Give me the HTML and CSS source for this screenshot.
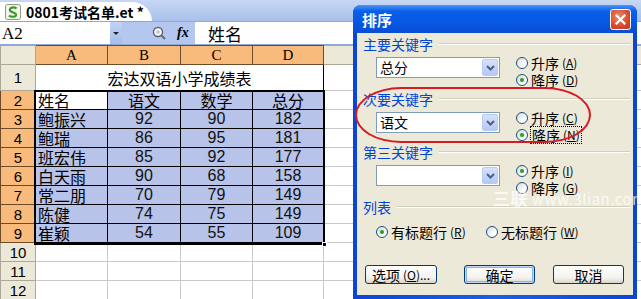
FILE: index.html
```html
<!DOCTYPE html>
<html lang="zh-CN">
<head>
    <meta charset="UTF-8">
    <title>0801考试名单.et - 排序</title>
    <link rel="stylesheet" href="styles.css">
</head>
<body>
<div class="app">
    <!-- pestaña del libro -->
    <div class="tabbar">
        <div class="tab">
            <svg class="tab-icon" width="16" height="16" viewBox="0 0 16 16">
                <rect x="0.5" y="0.5" width="15" height="15" rx="2" fill="#f4f4ee" stroke="#8a9a7a"/>
                <path d="M11.5 4.5 C 9 2.5, 4 3.5, 5 6.5 C 6 9, 11.5 8, 11 11 C 10.5 13.5, 5.5 13, 4 11.5" fill="none" stroke="#3a9a2a" stroke-width="2.2"/>
            </svg>
            <span class="tab-title">0801考试名单.et *</span>
        </div>
    </div>

    <!-- barra de fórmulas -->
    <div class="formula">
        <div class="namebox">A2</div>
        <div class="nb-drop"><span></span></div>
        <div class="fx-tools">
            <svg width="14" height="14" viewBox="0 0 14 14">
                <circle cx="6" cy="6" r="4.5" fill="#fff" stroke="#5a6070" stroke-width="1.4"/>
                <circle cx="6" cy="6" r="2" fill="#c8ccd8"/>
                <line x1="9.3" y1="9.3" x2="13" y2="13" stroke="#6a6a6a" stroke-width="2"/>
            </svg>
            <span class="fx">fx</span>
        </div>
        <div class="fx-input">姓名</div>
    </div>

    <!-- hoja -->
    <table class="sheet">
        <colgroup>
            <col style="width:35px"><col style="width:72px"><col style="width:73px"><col style="width:72px"><col style="width:71px">
            <col style="width:72px"><col style="width:72px"><col style="width:72px"><col style="width:72px"><col style="width:72px">
        </colgroup>
        <tr class="hdr">
            <th class="corner"></th>
            <th class="col on">A</th><th class="col on">B</th><th class="col on">C</th><th class="col on">D</th>
            <th class="col">E</th><th class="col">F</th><th class="col">G</th><th class="col">H</th><th class="col">I</th>
        </tr>
        <tr class="r1">
            <th class="row">1</th>
            <td class="title" colspan="4">宏达双语小学成绩表</td>
            <td></td><td></td><td></td><td></td><td></td>
        </tr>
        <tr>
            <th class="row on">2</th>
            <td class="d active left">姓名</td><td class="d">语文</td><td class="d">数学</td><td class="d">总分</td>
            <td></td><td></td><td></td><td></td><td></td>
        </tr>
        <tr>
            <th class="row on">3</th>
            <td class="d left">鲍振兴</td><td class="d num">92</td><td class="d num">90</td><td class="d num">182</td>
            <td></td><td></td><td></td><td></td><td></td>
        </tr>
        <tr>
            <th class="row on">4</th>
            <td class="d left">鲍瑞</td><td class="d num">86</td><td class="d num">95</td><td class="d num">181</td>
            <td></td><td></td><td></td><td></td><td></td>
        </tr>
        <tr>
            <th class="row on">5</th>
            <td class="d left">班宏伟</td><td class="d num">85</td><td class="d num">92</td><td class="d num">177</td>
            <td></td><td></td><td></td><td></td><td></td>
        </tr>
        <tr>
            <th class="row on">6</th>
            <td class="d left">白天雨</td><td class="d num">90</td><td class="d num">68</td><td class="d num">158</td>
            <td></td><td></td><td></td><td></td><td></td>
        </tr>
        <tr>
            <th class="row on">7</th>
            <td class="d left">常二朋</td><td class="d num">70</td><td class="d num">79</td><td class="d num">149</td>
            <td></td><td></td><td></td><td></td><td></td>
        </tr>
        <tr>
            <th class="row on">8</th>
            <td class="d left">陈健</td><td class="d num">74</td><td class="d num">75</td><td class="d num">149</td>
            <td></td><td></td><td></td><td></td><td></td>
        </tr>
        <tr>
            <th class="row on">9</th>
            <td class="d left">崔颖</td><td class="d num">54</td><td class="d num">55</td><td class="d num">109</td>
            <td></td><td></td><td></td><td></td><td></td>
        </tr>
        <tr>
            <th class="row">10</th>
            <td></td><td></td><td></td><td></td><td></td><td></td><td></td><td></td><td></td>
        </tr>
        <tr>
            <th class="row">11</th>
            <td></td><td></td><td></td><td></td><td></td><td></td><td></td><td></td><td></td>
        </tr>
        <tr>
            <th class="row">12</th>
            <td></td><td></td><td></td><td></td><td></td><td></td><td></td><td></td><td></td>
        </tr>
    </table>

    <!-- marco de la selección -->
    <div class="selection"><span class="handle"></span></div>

    <!-- diálogo Ordenar -->
    <div class="dialog">
        <div class="dlg-title">
            <span>排序</span>
            <span class="dlg-close">
                <svg width="11" height="11" viewBox="0 0 11 11">
                    <path d="M1.5 1.5 L9.5 9.5 M9.5 1.5 L1.5 9.5" stroke="#fff" stroke-width="2.2" stroke-linecap="square"/>
                </svg>
            </span>
        </div>
        <div class="dlg-body">
            <div class="group">
                <div class="group-label">主要关键字</div>
                <div class="group-row">
                    <div class="combo">
                        <span class="combo-text">总分</span>
                        <span class="combo-btn"><svg width="9" height="6" viewBox="0 0 9 6"><path d="M1 1 L4.5 4.5 L8 1" fill="none" stroke="#4d6185" stroke-width="2"/></svg></span>
                    </div>
                    <div class="radios">
                        <div class="radio"><span class="dot"></span>升序<small>(<u>A</u>)</small></div>
                        <div class="radio"><span class="dot on"></span>降序<small>(<u>D</u>)</small></div>
                    </div>
                </div>
            </div>
            <div class="group g2">
                <div class="group-label">次要关键字</div>
                <div class="group-row">
                    <div class="combo">
                        <span class="combo-text">语文</span>
                        <span class="combo-btn"><svg width="9" height="6" viewBox="0 0 9 6"><path d="M1 1 L4.5 4.5 L8 1" fill="none" stroke="#4d6185" stroke-width="2"/></svg></span>
                    </div>
                    <div class="radios">
                        <div class="radio"><span class="dot"></span>升序<small>(<u>C</u>)</small></div>
                        <div class="radio"><span class="dot on"></span><span class="focus">降序<small>(<u>N</u>)</small></span></div>
                    </div>
                </div>
            </div>
            <div class="group">
                <div class="group-label">第三关键字</div>
                <div class="group-row">
                    <div class="combo">
                        <span class="combo-text"></span>
                        <span class="combo-btn"><svg width="9" height="6" viewBox="0 0 9 6"><path d="M1 1 L4.5 4.5 L8 1" fill="none" stroke="#4d6185" stroke-width="2"/></svg></span>
                    </div>
                    <div class="radios">
                        <div class="radio"><span class="dot on"></span>升序<small>(<u>I</u>)</small></div>
                        <div class="radio"><span class="dot"></span>降序<small>(<u>G</u>)</small></div>
                    </div>
                </div>
            </div>
            <div class="list">
                <div class="group-label">列表</div>
                <div class="list-row">
                    <div class="radio first"><span class="dot on"></span>有标题行<small>(<u>R</u>)</small></div>
                    <div class="radio"><span class="dot"></span>无标题行<small>(<u>W</u>)</small></div>
                </div>
            </div>
            <div class="buttons">
                <div class="btn b1">选项<small>(<u>O</u>)...</small></div>
                <div class="btn b2 def">确定</div>
                <div class="btn b3">取消</div>
            </div>
        </div>
        <div class="mark"></div>
    </div>

    <div class="watermark"><b>三联</b> www.3lian.com</div>
</div>
</body>
</html>
```

FILE: styles.css
```css
* {
    box-sizing: border-box;
}
body {
    margin: 0;
    width: 641px;
    height: 299px;
    overflow: hidden;
    background: #fff;
    font-family: "Noto Sans CJK SC", sans-serif;
    color: #000;
}
.app {
    position: relative;
    width: 641px;
    height: 299px;
    overflow: hidden;
}

/* pestaña */
.tabbar {
    height: 22px;
    background: linear-gradient(#c7d7f4, #a9c0ea);
    border-bottom: 1px solid #8ea8d8;
    display: flex;
    align-items: flex-end;
}
.tab {
    height: 19px;
    width: 152px;
    background: #fff;
    border-top-right-radius: 20px 19px;
    display: flex;
    align-items: center;
    padding-left: 5px;
    gap: 5px;
}
.tab-title {
    font-size: 14px;
    font-weight: bold;
    line-height: 1;
    white-space: nowrap;
}

/* fórmulas */
.formula {
    height: 23px;
    display: flex;
    background: #b3c7ef;
    border-bottom: 1px solid #8ea8d8;
}
.namebox {
    width: 110px;
    background: #fff;
    font-family: "Liberation Serif", serif;
    font-size: 17px;
    line-height: 23px;
    padding-left: 2px;
}
.nb-drop {
    width: 12px;
    background: linear-gradient(#c2d4f6, #a4bdec);
    display: flex;
    align-items: center;
    justify-content: center;
}
.nb-drop span {
    border-left: 3px solid transparent;
    border-right: 3px solid transparent;
    border-top: 3px solid #222;
}
.fx-tools {
    width: 73px;
    display: flex;
    align-items: center;
    padding-left: 30px;
    gap: 11px;
}
.fx {
    font-family: "Liberation Serif", serif;
    font-style: italic;
    font-weight: bold;
    font-size: 14px;
}
.fx-input {
    flex: 1;
    background: #fff;
    font-size: 17px;
    line-height: 23px;
    padding-left: 13px;
}

/* hoja */
.sheet {
    border-collapse: collapse;
    table-layout: fixed;
    width: 683px;
}
.sheet tr {
    height: 19px;
}
.sheet tr.r1 {
    height: 26px;
}
.sheet th,
.sheet td {
    padding: 0;
    border: 1px solid #c9c9c9;
    font-weight: normal;
    line-height: 1;
    white-space: nowrap;
    overflow: hidden;
}
.sheet th {
    background: #ece9d8;
    border-color: #aca899;
}
.sheet th.col {
    font-family: "Liberation Serif", serif;
    font-size: 15px;
}
.sheet th.row {
    font-family: "Liberation Sans", sans-serif;
    font-size: 15px;
}
.sheet th.on {
    background: #f8bb7b;
    border-color: #6d4a28;
}
.sheet td {
    font-size: 16px;
    text-align: center;
}
.sheet td.title {
    border: 1px solid #000;
}
.sheet td.d {
    border: 1px solid #000;
    background: #b7c3e8;
}
.sheet td.active {
    background: #fff;
}
.sheet td.left {
    text-align: left;
    padding-left: 2px;
}
.sheet td.num {
    font-family: "Liberation Sans", sans-serif;
    font-size: 16px;
    color: #111;
}

.selection {
    position: absolute;
    left: 34px;
    top: 90px;
    width: 291px;
    height: 155px;
    border: 2px solid #000;
}
.handle {
    position: absolute;
    right: -4px;
    bottom: -4px;
    width: 5px;
    height: 5px;
    background: #000;
    border: 1px solid #fff;
}

/* diálogo */
.dialog {
    position: absolute;
    left: 353px;
    top: 5px;
    width: 284px;
    height: 294px;
    background: linear-gradient(90deg, #0a45d6, #1a5fe8 50%, #0a45d6);
    border-radius: 8px 8px 0 0;
    padding: 0 4px 4px;
    display: flex;
    flex-direction: column;
}
.dlg-title {
    height: 28px;
    margin: 0 -4px;
    padding: 0 6px 0 9px;
    border-radius: 8px 8px 0 0;
    background: linear-gradient(#4a98f8, #0c5ee8 22%, #0558e6 60%, #0a4ed2);
    color: #fff;
    font-size: 15px;
    font-weight: bold;
    display: flex;
    align-items: center;
    justify-content: space-between;
}
.dlg-close {
    width: 21px;
    height: 21px;
    border: 1px solid #fff;
    border-radius: 3px;
    background: radial-gradient(circle at 40% 35%, #f08a6a, #d9482a 60%, #c23618);
    display: flex;
    align-items: center;
    justify-content: center;
}
.dlg-body {
    flex: 1;
    background: #ece9d8;
    padding: 3px 3px 0 6px;
    font-size: 14px;
}
.group {
    height: 55px;
}
.group.g2 {
    height: 53px;
}
.group-label {
    height: 16px;
    line-height: 16px;
    color: #0046d5;
    display: flex;
    align-items: center;
}
.group-label::after {
    content: "";
    flex: 1;
    margin-left: 6px;
    border-top: 1px solid #d0d0bf;
    border-bottom: 1px solid #fff;
}
.group-row {
    display: flex;
    margin-top: 2px;
    padding-left: 13px;
}
.combo {
    width: 124px;
    height: 21px;
    margin-top: 3px;
    border: 1px solid #7f9db9;
    background: #fff;
    display: flex;
    align-items: center;
}
.combo-text {
    flex: 1;
    padding-left: 3px;
    line-height: 19px;
}
.combo-btn {
    width: 16px;
    height: 17px;
    margin-right: 1px;
    border: 1px solid #b9cbf3;
    border-radius: 2px;
    background: linear-gradient(#d6e2fc, #b4c8f6);
    display: flex;
    align-items: center;
    justify-content: center;
}
.radios {
    margin-left: 16px;
    display: flex;
    flex-direction: column;
}
.radio {
    height: 17px;
    display: flex;
    align-items: center;
    line-height: 1;
    white-space: nowrap;
}
.radio small,
.btn small {
    font-size: 12px;
    margin-left: 3px;
}
.dot {
    position: relative;
    width: 12px;
    height: 12px;
    margin-right: 3px;
    border-radius: 50%;
    border: 1px solid #1c5180;
    background: linear-gradient(135deg, #d8d8d0, #fff 70%);
}
.dot.on::after {
    content: "";
    position: absolute;
    left: 3px;
    top: 3px;
    width: 4px;
    height: 4px;
    border-radius: 50%;
    background: #2da22d;
    box-shadow: 0 0 1px #7ad27a;
}
.focus {
    display: flex;
    align-items: center;
    outline: 1px dotted #000;
    padding: 1px 1px;
}
.list-row {
    display: flex;
    margin-top: 8px;
    padding-left: 13px;
}
.radio.first {
    width: 110px;
}
.buttons {
    display: flex;
    margin-top: 25px;
}
.btn {
    height: 19px;
    width: 72px;
    border: 1px solid #003c74;
    border-radius: 3px;
    background: linear-gradient(#fff, #f3f2ed 70%, #d9d4c8);
    display: flex;
    align-items: center;
    justify-content: center;
    line-height: 1;
}
.btn.b1 {
    margin-left: 2px;
}
.btn.b2 {
    margin-left: 27px;
    width: 71px;
}
.btn.b3 {
    margin-left: 18px;
    width: 71px;
}
.btn.def {
    box-shadow: inset 0 0 0 1px #c2d6f7, inset 0 0 0 2px #8eb1ea;
}
.mark {
    position: absolute;
    left: 2px;
    top: 82px;
    width: 236px;
    height: 56px;
    border: 2px solid #d81a22;
    border-radius: 46px / 28px;
}
.watermark {
    position: absolute;
    left: 493px;
    top: 185px;
    font-size: 15px;
    color: rgba(255, 255, 255, 0.75);
    white-space: nowrap;
    letter-spacing: 0.5px;
}
.watermark b {
    font-size: 17px;
}
```
